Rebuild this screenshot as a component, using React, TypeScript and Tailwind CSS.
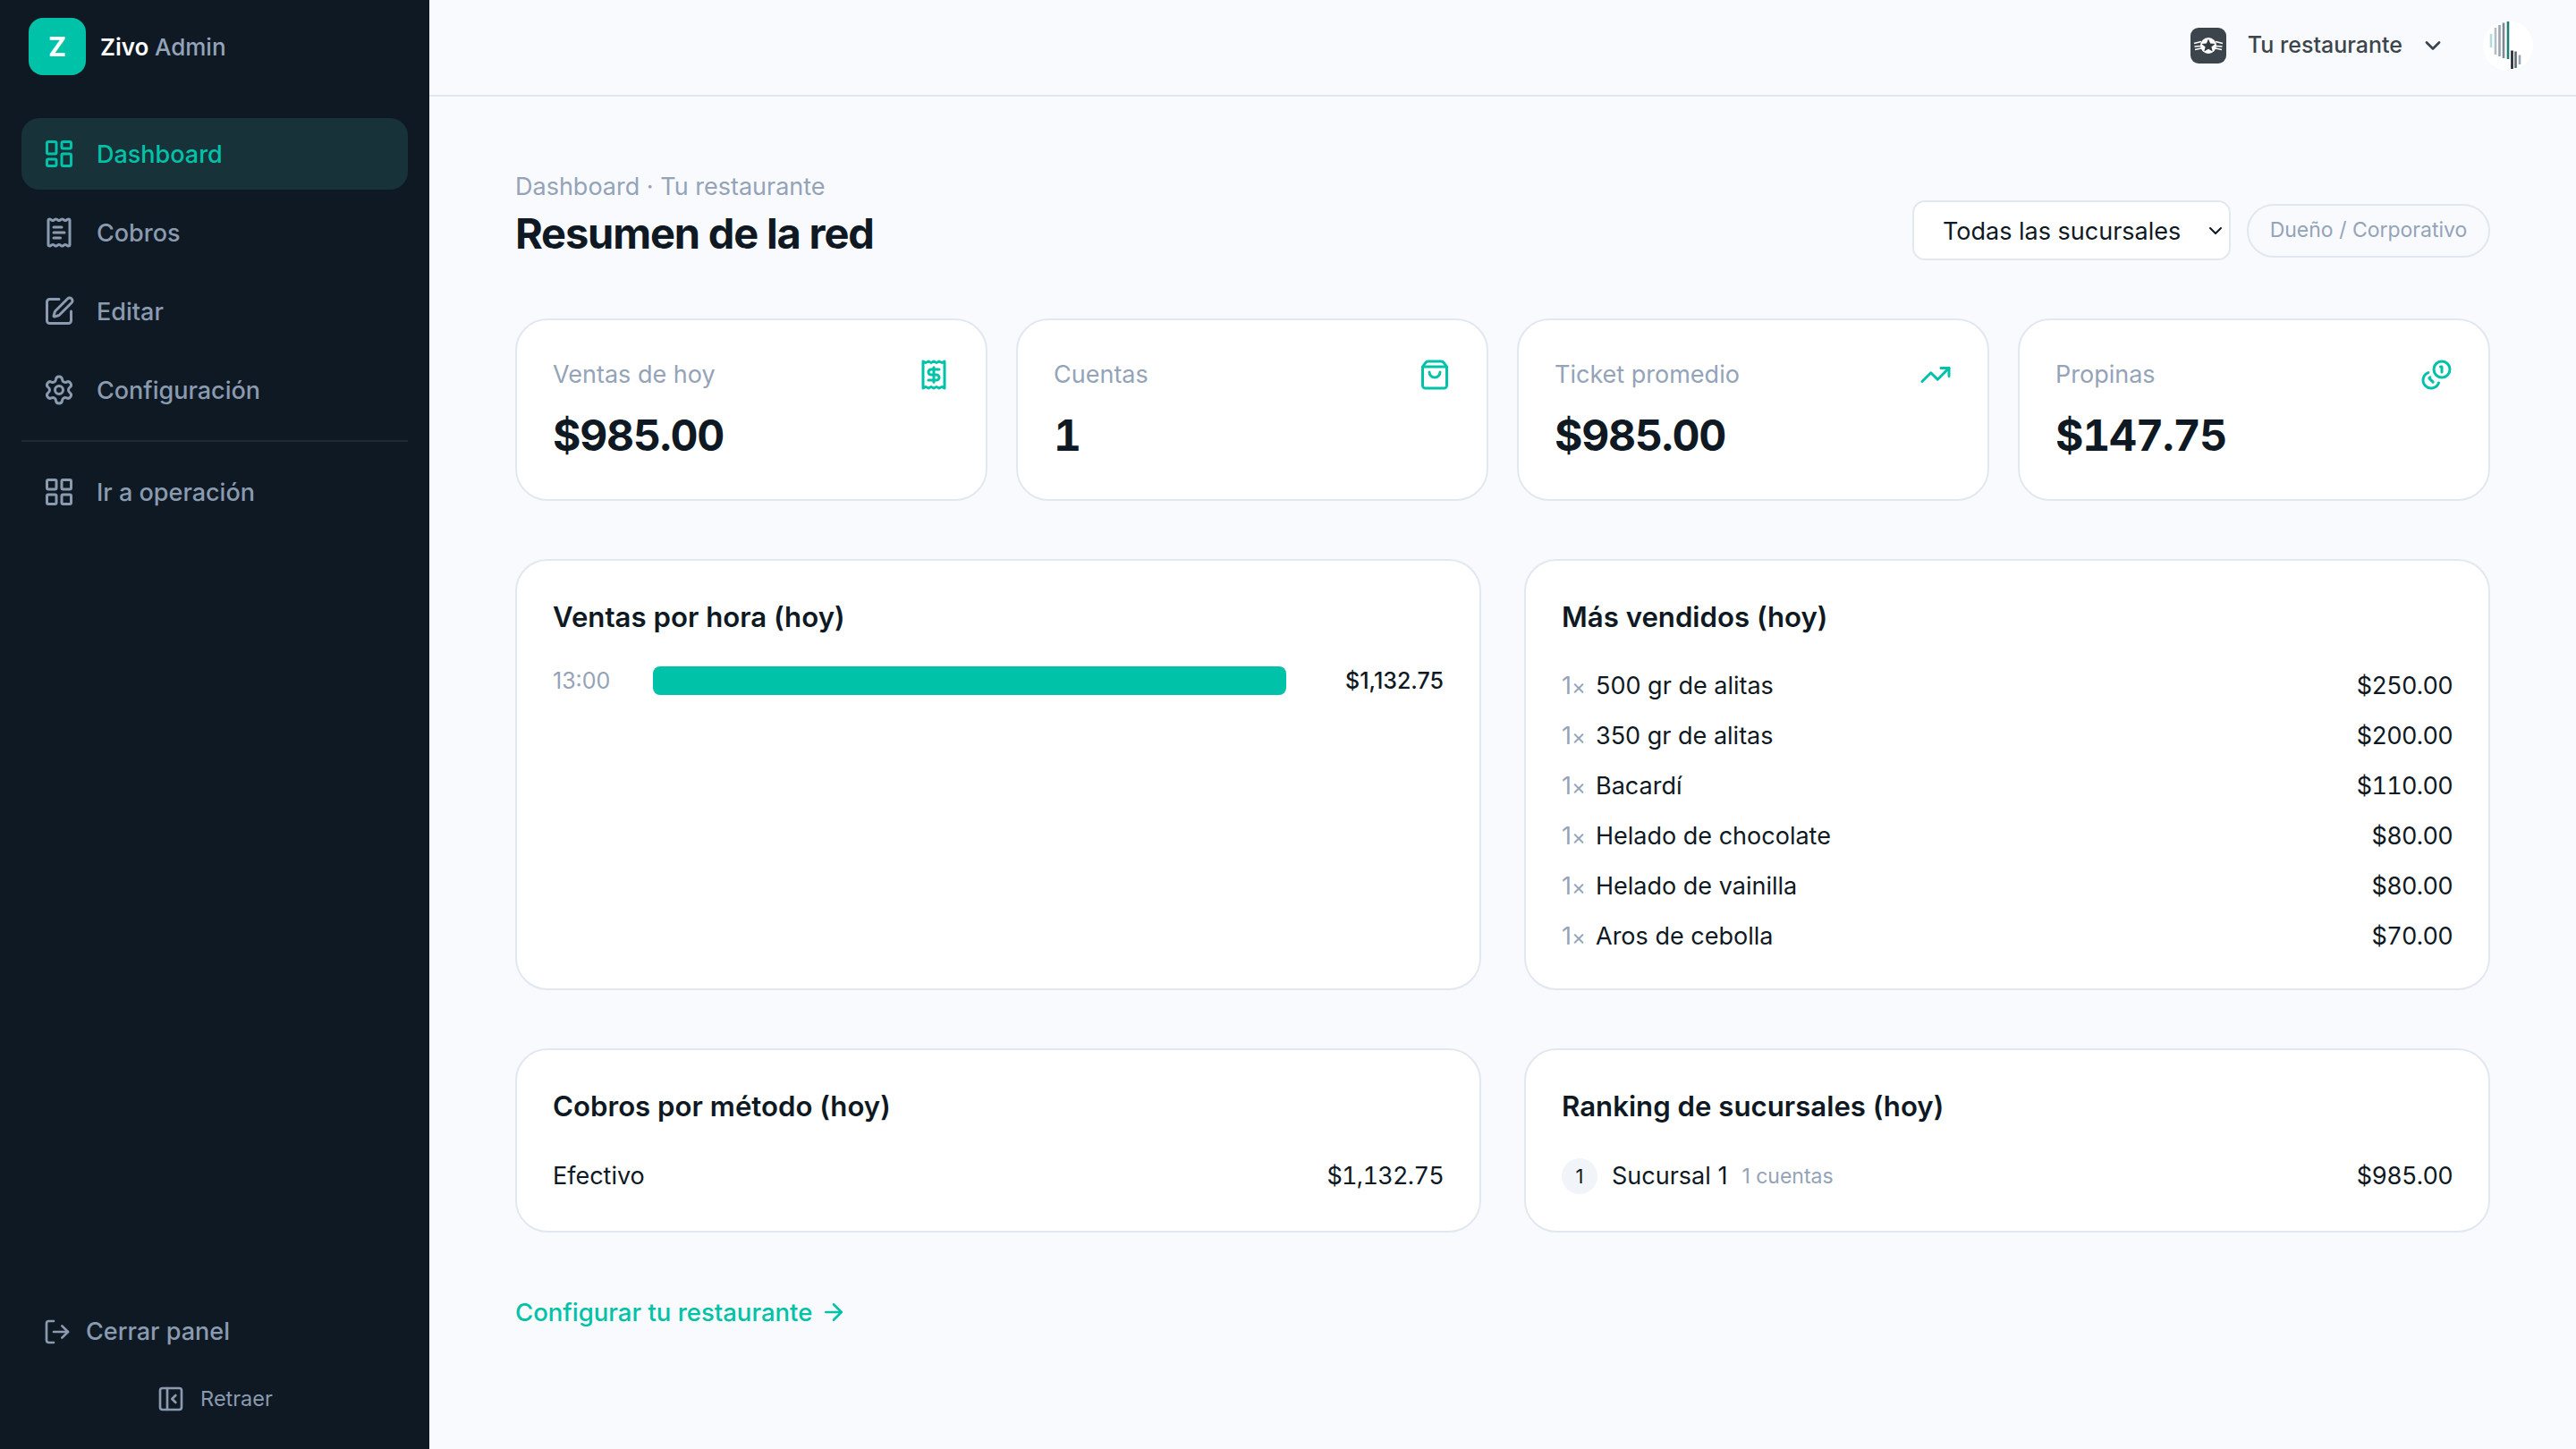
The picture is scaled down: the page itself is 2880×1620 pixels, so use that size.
import {
  ArrowRight,
  ChevronDown,
  LayoutDashboard,
  LayoutGrid,
  LogOut,
  PanelLeftClose,
  Receipt,
  ReceiptText,
  Settings,
  ShoppingBag,
  SquarePen,
  TrendingUp,
} from 'lucide-react';

const navItems = [
  { label: 'Dashboard', icon: LayoutDashboard, active: true },
  { label: 'Cobros', icon: ReceiptText },
  { label: 'Editar', icon: SquarePen },
  { label: 'Configuración', icon: Settings },
];

const topSellers = [
  { name: '500 gr de alitas', price: '$250.00' },
  { name: '350 gr de alitas', price: '$200.00' },
  { name: 'Bacardí', price: '$110.00' },
  { name: 'Helado de chocolate', price: '$80.00' },
  { name: 'Helado de vainilla', price: '$80.00' },
  { name: 'Aros de cebolla', price: '$70.00' },
];

function CoinsIcon() {
  return (
    <svg width="36" height="36" viewBox="0 0 24 24" fill="none" stroke="currentColor" strokeWidth="2" strokeLinecap="round" strokeLinejoin="round">
      <circle cx="16" cy="8" r="6" />
      <path d="M5.91 10.37A6 6 0 1 0 13.66 18" />
      <path d="M15 6h1v4" />
      <path d="M7.29 13.88l-.7.71 2.82 2.82" />
    </svg>
  );
}

function RestaurantLogo() {
  return (
    <svg width="40" height="40" viewBox="0 0 40 40" className="shrink-0">
      <rect width="40" height="40" rx="9" fill="#3c454c" />
      <g stroke="#fff" strokeWidth="1.5">
        <path d="M4 17.5l8-2M4.5 21l7-.5M5 24.5l7-1.5M36 17.5l-8-2M35.5 21l-7-.5M35 24.5l-7-1.5" />
      </g>
      <circle cx="20" cy="20" r="9" fill="#fff" />
      <path d="M20 12.5l2.1 5 5.4.4-4.1 3.5 1.3 5.2-4.7-2.8-4.7 2.8 1.3-5.2-4.1-3.5 5.4-.4z" fill="#333b42" />
    </svg>
  );
}

function Avatar() {
  const stripes = [
    { x: 9, y1: 15, y2: 30, c: '#b5dcdc' },
    { x: 14, y1: 8, y2: 38, c: '#b4bec8' },
    { x: 18.5, y1: 5, y2: 40, c: '#9aa5b1' },
    { x: 23, y1: 2.5, y2: 42, c: '#7d8994' },
    { x: 28, y1: 1, y2: 43, c: '#1f7f78' },
    { x: 32.5, y1: 33.5, y2: 54, c: '#1b2430' },
    { x: 36.5, y1: 34.5, y2: 53, c: '#5f6a75' },
    { x: 41, y1: 38.5, y2: 49, c: '#9aa5b1' },
  ];
  return (
    <div className="w-14 h-14 rounded-full bg-white shrink-0">
      <svg width="56" height="56" viewBox="0 0 56 56">
        {stripes.map((s) => (
          <line key={s.x} x1={s.x} x2={s.x} y1={s.y1} y2={s.y2} stroke={s.c} strokeWidth="2.6" />
        ))}
      </svg>
    </div>
  );
}

function StatCard({ label, value, icon }: { label: string; value: string; icon: React.ReactNode }) {
  return (
    <div className="h-[204px] bg-white border-2 border-[#e2e8f0] rounded-[36px] px-[40px] pt-[41px]">
      <div className="flex items-center justify-between h-[40px]">
        <span className="text-[27px] text-[#94a3b8]">{label}</span>
        <span className="text-[#00c2a8]">{icon}</span>
      </div>
      <div className="mt-[18px] text-[48px] leading-[60px] font-bold tabular-nums tracking-[-1.2px] text-[#0f1923]">{value}</div>
    </div>
  );
}

function Panel({ title, className, children }: { title: string; className: string; children: React.ReactNode }) {
  return (
    <div className={`bg-white border-2 border-[#e2e8f0] rounded-[36px] px-[40px] pt-[43px] ${className}`}>
      <h3 className="text-[31.2px] leading-[40px] font-semibold text-[#0f1923]">{title}</h3>
      {children}
    </div>
  );
}

export default function App() {
  return (
    <div className="flex h-[1620px] w-[2880px] overflow-hidden bg-[#f8fafd] font-['Inter',sans-serif]">
      {/* SIDEBAR */}
      <aside className="w-[480px] shrink-0 bg-[#0f1923] flex flex-col px-6 pb-[32px]">
        <div className="h-[132px] pl-2 pb-[28px] flex items-center gap-4">
          <div className="w-16 h-16 rounded-[16px] bg-[#00c2a8] flex items-center justify-center text-white text-[30px] font-bold">
            Z
          </div>
          <span className="text-[26px] font-semibold text-white">
            Zivo <span className="text-[#94a3b8] font-medium">Admin</span>
          </span>
        </div>

        <nav className="flex flex-col gap-2">
          {navItems.map((item) => (
            <a
              key={item.label}
              className={`h-20 rounded-[20px] px-6 flex items-center gap-6 text-[27px] font-medium ${
                item.active ? 'bg-[#18323a] text-[#00c2a8]' : 'text-[#8a9bb0]'
              }`}
            >
              <item.icon size={36} strokeWidth={2} />
              <span className="pt-[2px]">{item.label}</span>
            </a>
          ))}
        </nav>

        <div className="mt-4 mb-4 h-[2px] bg-[#1f2a35]" />

        <a className="h-20 rounded-[20px] px-6 flex items-center gap-6 text-[27px] font-medium text-[#8a9bb0]">
          <LayoutGrid size={36} strokeWidth={2} />
          <span className="pt-[2px]">Ir a operación</span>
        </a>

        <div className="mt-auto flex flex-col">
          <a className="h-14 px-6 flex items-center gap-4 text-[27px] font-medium text-[#8a9bb0]">
            <LogOut size={32} strokeWidth={2} />
            Cerrar panel
          </a>
          <button className="mt-[23px] h-12 flex items-center justify-center gap-[17px] text-[23.5px] text-[#8a9bb0]">
            <PanelLeftClose size={32} strokeWidth={2} />
            Retraer
          </button>
        </div>
      </aside>

      <div className="flex-1 min-w-0 flex flex-col">
        {/* HEADER */}
        <header className="h-[108px] shrink-0 border-b-2 border-[#e2e8f0] pr-12 pb-1 flex items-center justify-end">
          <RestaurantLogo />
          <span className="ml-6 text-[25px] font-medium text-[#3c454c]">Tu restaurante</span>
          <ChevronDown size={28} strokeWidth={2.4} className="ml-5 text-[#3c454c]" />
          <div className="ml-[42px]">
            <Avatar />
          </div>
        </header>

        <main className="flex-1 px-24 pt-[78px]">
          {/* TITLE */}
          <div className="flex items-end justify-between h-[105px] mb-[65px]">
            <div>
              <p className="text-[27px] leading-[44px] text-[#94a3b8]">Dashboard · Tu restaurante</p>
              <h1 className="text-[47px] leading-[60px] font-bold tracking-tight text-[#0f1923]">Resumen de la red</h1>
            </div>
            <div className="flex items-center gap-[18px]">
              <div className="relative">
                <select className="block w-[356px] h-[67px] appearance-none bg-white border-2 border-[#e2e8f0] rounded-[14px] pl-[32px] pr-2 pt-[3px] text-[27px] text-[#0f1923]">
                  <option>Todas las sucursales</option>
                </select>
                <ChevronDown size={24} strokeWidth={2} className="absolute right-[5px] top-[22px] text-[#0f1923]" />
              </div>
              <span className="h-[60px] w-[272px] rounded-full border-2 border-[#e2e8f0] flex items-center justify-center text-[23px] text-[#94a3b8]">
                Dueño / Corporativo
              </span>
            </div>
          </div>

          {/* STATS */}
          <div className="grid grid-cols-4 gap-8 mb-[65px]">
            <StatCard label="Ventas de hoy" value="$985.00" icon={<Receipt size={36} strokeWidth={2} />} />
            <StatCard label="Cuentas" value="1" icon={<ShoppingBag size={36} strokeWidth={2} />} />
            <StatCard label="Ticket promedio" value="$985.00" icon={<TrendingUp size={36} strokeWidth={2} />} />
            <StatCard label="Propinas" value="$147.75" icon={<CoinsIcon />} />
          </div>

          {/* CHARTS */}
          <div className="grid grid-cols-2 gap-12 mb-[65px]">
            <Panel title="Ventas por hora (hoy)" className="h-[482px]">
              <div className="mt-[35px] flex items-center h-8">
                <span className="w-[112px] pt-[2px] text-[25px] text-[#94a3b8]">13:00</span>
                <div className="w-[708px] h-8 rounded-[8px] bg-[#00c2a8]" />
                <span className="flex-1 pt-[2px] text-right text-[25px] font-medium text-[#0f1923]">$1,132.75</span>
              </div>
            </Panel>

            <Panel title="Más vendidos (hoy)" className="h-[482px]">
              <div className="mt-[29px] flex flex-col">
                {topSellers.map((item) => (
                  <div key={item.name} className="h-[56px] flex items-center justify-between text-[27px] text-[#0f1923]">
                    <span className="flex items-center">
                      <span className="w-[38px] text-[#94a3b8]">1<span className="text-[24px]">×</span></span>
                      {item.name}
                    </span>
                    <span className="tabular-nums tracking-[-0.7px]">{item.price}</span>
                  </div>
                ))}
              </div>
            </Panel>
          </div>

          <div className="grid grid-cols-2 gap-12">
            <Panel title="Cobros por método (hoy)" className="h-[206px]">
              <div className="mt-[38px] h-10 flex items-center justify-between text-[27px] text-[#0f1923]">
                <span>Efectivo</span>
                <span className="tabular-nums tracking-[-0.7px]">$1,132.75</span>
              </div>
            </Panel>

            <Panel title="Ranking de sucursales (hoy)" className="h-[206px]">
              <div className="mt-[38px] h-10 flex items-center justify-between text-[27px] text-[#0f1923]">
                <span className="flex items-center">
                  <span className="w-10 h-10 rounded-full bg-[#f1f5f9] flex items-center justify-center text-[22px] mr-[16px]">1</span>
                  Sucursal 1
                  <span className="ml-[16px] text-[23px] text-[#94a3b8]">1 cuentas</span>
                </span>
                <span className="tabular-nums tracking-[-0.7px]">$985.00</span>
              </div>
            </Panel>
          </div>

          {/* LINK */}
          <a className="mt-[69px] inline-flex items-center gap-[9px] text-[27.5px] leading-[40px] font-medium text-[#00c2a8]">
            Configurar tu restaurante
            <ArrowRight size={30} strokeWidth={2} />
          </a>
        </main>
      </div>
    </div>
  );
}
